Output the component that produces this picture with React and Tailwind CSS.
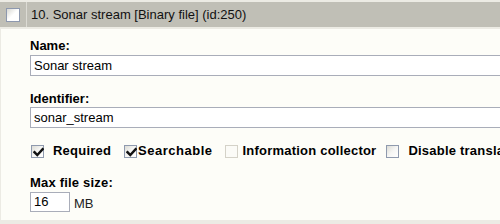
import React from "react";

function Check({ checked, disabled, className = "" }) {
  return (
    <span
      className={
        "relative inline-block w-[13px] h-[13px] shrink-0 border " +
        (disabled
          ? "border-[#d4d2c8] bg-[#fbfbf7] "
          : "border-[#8f9aae] bg-gradient-to-br from-[#dcdcd6] via-[#f6f6f4] to-white ") +
        className
      }
    >
      {checked && (
        <svg
          className="absolute left-[1px] top-[1px]"
          width="11"
          height="11"
          viewBox="0 0 11 11"
        >
          <path
            d="M1.5 5.2 L4.3 8 L9.6 2.2"
            fill="none"
            stroke="#111"
            strokeWidth="2.4"
            strokeLinecap="square"
          />
        </svg>
      )}
    </span>
  );
}

export default function App() {
  return (
    <div
      className="w-[500px] h-[224px] overflow-hidden bg-[#ecebe4] pt-[2px] text-black"
      style={{ fontFamily: '"Liberation Sans", Arial, sans-serif' }}
    >
      <div className="flex h-[25px] bg-[#c0bfb6]">
        <div className="w-[27px] flex items-center justify-center border-r border-[#dcdbd4]">
          <span className="inline-block w-[14px] h-[14px] border border-[#8d98ae] bg-gradient-to-br from-[#d8d8d2] via-white to-white" />
        </div>
        <div className="flex items-center pl-[4px] text-[13px] text-[#111]">
          10. Sonar stream [Binary file] (id:250)
        </div>
      </div>
      <div className="mt-[2px] ml-[1px] h-[191px] bg-[#fdfdf8] pl-[29px] pt-[9px]">
        <div className="text-[13px] font-bold leading-[16px]">Name:</div>
        <div className="mt-[1px] h-[21px] w-[480px] border border-[#a9adb9] bg-white px-[3px] text-[13px] leading-[19px]">
          Sonar stream
        </div>
        <div className="mt-[15px] text-[13px] font-bold leading-[16px]">Identifier:</div>
        <div className="h-[21px] w-[480px] border border-[#a9adb9] bg-white px-[3px] text-[13px] leading-[19px]">
          sonar_stream
        </div>
        <div className="mt-[16px] flex items-center h-[14px] text-[13px] font-bold tracking-[0.22px] whitespace-nowrap">
          <Check checked className="ml-[1px]" />
          <span className="ml-[9px]">Required</span>
          <Check checked className="ml-[13px]" />
          <span className="ml-[1px] tracking-[0.5px]">Searchable</span>
          <Check disabled className="ml-[13px]" />
          <span className="ml-[4px]">Information collector</span>
          <Check className="ml-[10px]" />
          <span className="ml-[9px]">Disable translation</span>
        </div>
        <div className="mt-[17px] text-[13px] font-bold leading-[16px] tracking-[0.2px]">Max file size:</div>
        <div className="flex items-end mt-[1px]">
          <div className="h-[20px] w-[40px] border border-[#a9adb9] bg-white px-[3px] text-[13px] leading-[18px]">
            16
          </div>
          <span className="ml-[4px] text-[13px] leading-[16px] text-[#222]">MB</span>
        </div>
      </div>
    </div>
  );
}
